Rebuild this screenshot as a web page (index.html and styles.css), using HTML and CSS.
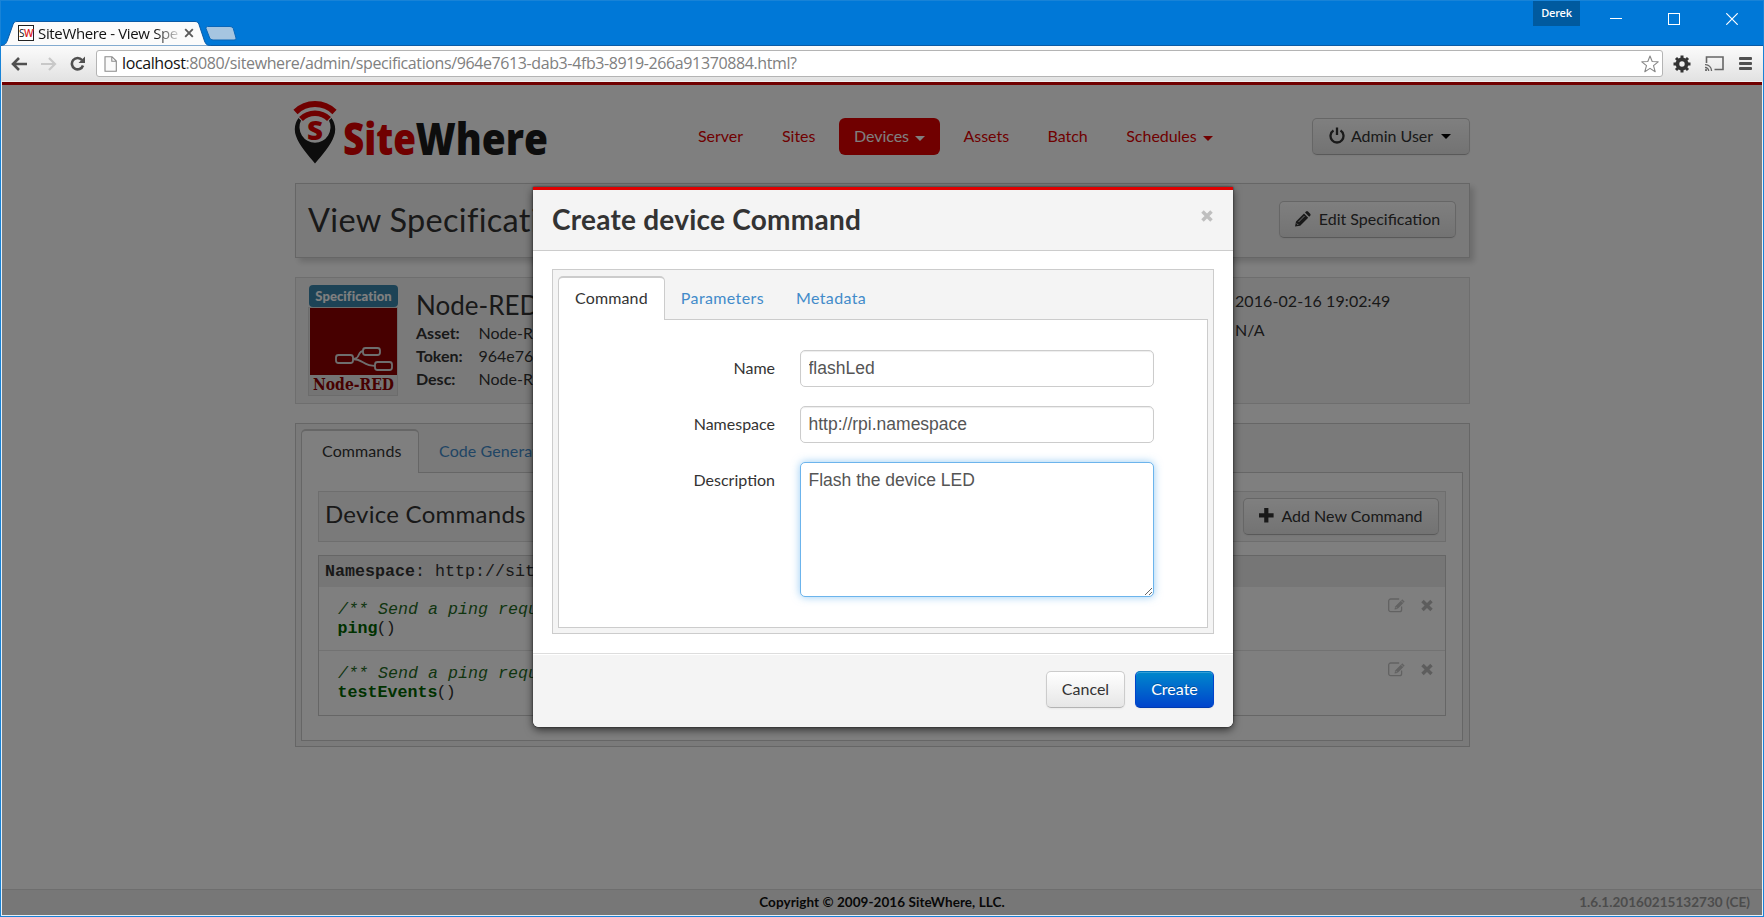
FILE: index.html
```html
<!DOCTYPE html>
<html lang="en">
<head>
<meta charset="utf-8">
<title>SiteWhere - View Specification</title>
<link rel="stylesheet" href="styles.css">
</head>
<body>
<svg class="defs" width="0" height="0">
  <symbol id="edit" viewBox="0 0 18 15"><path d="M13.6 8.5v3.2a2 2 0 0 1-2 2H2.700a2 2 0 0 1-2-2V3a2 2 0 0 1 2-2h8.500" fill="none" stroke="currentColor" stroke-width="1.300"/><path d="M6.500 11.500l.6-3L14.300 1.300l2.400 2.400-7.200 7.200z" fill="currentColor"/><path d="M7.500 8.800l1.700 1.700M13 2.500l2.400 2.400" stroke="#fff" stroke-width=".8"/></symbol>
  <symbol id="cross" viewBox="0 0 12 12"><path d="M1.500 1.500l9 9M10.500 1.500l-9 9" stroke="currentColor" stroke-width="3.500"/></symbol>
</svg>
<div class="window">
  <header class="titlebar">
    <div class="tab">
      <svg class="tab-shape" width="212" height="25" viewBox="0 0 212 25"><path d="M0 24.500C4 24 5 23 6.500 19L12 3.500C13 1 14 .5 16 .5H194c2 0 3.200.8 4 3l5.500 16.500c1.500 3.500 2.500 4.500 6 4.500V25H0z" fill="#fbfbfb" stroke="#0a5aa5" stroke-width="1"/></svg>
      <span class="favicon">S<b>W</b></span>
      <span class="tab-title">SiteWhere - View Spe</span>
      <svg class="tab-close" width="10" height="10"><path d="M1.200 1.200l7.600 7.600M8.800 1.200L1.200 8.800" stroke="#5a5a5a" stroke-width="1.900"/></svg>
    </div>
    <svg class="new-tab" width="32" height="15"><path d="M2.500.5H25q2.500 0 3.300 2l2.700 9.500q.7 2-2 2H8q-2.500 0-3.300-2L1 2.500Q.5.500 2.500.5z" fill="#a6c5e0" stroke="#0a66b8"/></svg>
    <div class="spacer"></div>
    <span class="user-badge">Derek</span>
    <div class="win-controls">
      <svg width="12" height="12"><path d="M0 5.500h12" stroke="#fff"/></svg>
      <svg width="12" height="12"><rect x=".5" y=".5" width="11" height="11" fill="none" stroke="#fff"/></svg>
      <svg width="12" height="12"><path d="M.3.300l11.400 11.400M11.700.300L.3 11.700" stroke="#fff" stroke-width="1.200"/></svg>
    </div>
  </header>
  <div class="toolbar">
    <svg class="back" width="16" height="14"><path d="M8 1L2 7l6 6M2 7h14" fill="none" stroke="#505050" stroke-width="2.600"/></svg>
    <svg class="fwd" width="16" height="14"><path d="M8 1l6 6-6 6M14 7H0" fill="none" stroke="#c8c8c8" stroke-width="2.200"/></svg>
    <svg class="reload" width="16" height="15"><path d="M12 4A5.700 5.700 0 1 0 13 9.500" fill="none" stroke="#505050" stroke-width="2.600"/><path d="M15 .5V7H8.500z" fill="#505050"/></svg>
    <div class="omnibox">
      <svg width="13" height="16"><path d="M1 .7h7l4.300 4.300v10.300H1zM7.800.7V5.200h4.500" fill="#fafafa" stroke="#8a8a8a" stroke-width="1.100"/></svg>
      <span class="url"><b>localhost</b>:8080/sitewhere/admin/specifications/964e7613-dab3-4fb3-8919-266a91370884.html?</span>
      <svg class="star" width="18" height="18" viewBox="0 0 18 18"><path d="M9 1l2.200 5.500 6 .3-4.700 3.900 1.700 6L9 13.400 3.800 16.700l1.700-6L.8 6.800l6-.3z" fill="#fff" stroke="#888" stroke-width="1.100" stroke-linejoin="round"/></svg>
    </div>
    <svg class="gear" width="18" height="18" viewBox="-9 -9 18 18"><circle r="4.600" fill="none" stroke="#333" stroke-width="3.800"/><path d="M0-8.500v3M0 8.500v-3M-8.500 0h3M8.500 0h-3M-6-6l2 2M6 6L4 4M-6 6l2-2M6-6L4-4" stroke="#333" stroke-width="3"/></svg>
    <svg class="cast" width="19" height="15"><path d="M1.500 7V1h16.500v12.500H9.500" fill="none" stroke="#666" stroke-width="1.600"/><path d="M0 8.700A6 6 0 0 1 6.500 15M0 11.500A3.500 3.500 0 0 1 3.700 15" fill="none" stroke="#666" stroke-width="1.300"/><circle cx="1" cy="14" r="1.100" fill="#666"/></svg>
    <svg class="menu" width="13" height="13"><path d="M1 1.500h11M1 6.500h11M1 11.500h11" stroke="#505050" stroke-width="2.800" stroke-linecap="round"/></svg>
  </div>

  <div class="page">
    <div class="container">
      <div class="masthead">
        <svg class="logo" width="262" height="80" viewBox="0 0 262 80">
          <path d="M5.500 18A20 20 0 0 0 3 36C6 45 15 55 22 63.500 29 55 38 45 41 36A20 20 0 0 0 38.500 18L36 20.500A15.500 15.500 0 1 1 8 20.500z" fill="#1a1a1a"/>
          <path d="M2.500 12A28 28 0 0 1 41.500 12" fill="none" stroke="#e00000" stroke-width="6"/>
          <path d="M8 19A20 20 0 0 1 36 19" fill="none" stroke="#e00000" stroke-width="5.500"/>
          <text x="14" y="39.500" class="pin-letter" textLength="16" lengthAdjust="spacingAndGlyphs">S</text>
          <text x="50" y="55" class="logo-text" textLength="73" lengthAdjust="spacingAndGlyphs" fill="#e00000">Site</text>
          <text x="122.500" y="55" class="logo-text" textLength="132.500" lengthAdjust="spacingAndGlyphs" fill="#1a1a1a">Where</text>
        </svg>
        <nav class="nav">
          <a>Server</a><a>Sites</a><a class="active">Devices<i class="caret"></i></a><a>Assets</a><a>Batch</a><a>Schedules<i class="caret"></i></a>
        </nav>
        <a class="btn admin"><svg width="16" height="17"><path d="M4.500 3.500a6.500 6.500 0 1 0 7 0M8 .5v7.500" fill="none" stroke="#333" stroke-width="2.300"/></svg>Admin User<i class="caret"></i></a>
      </div>

      <div class="title-panel">
        <h1>View Specification</h1>
        <a class="btn edit-btn"><svg width="17" height="16"><path d="M0 15.500L1 10.500 9 2.500l4.200 4.200-8 8zM10 1.500l1-1q1-.8 2 0l2.200 2.200q.8 1 0 2l-1 1z" fill="#333"/><path d="M3.500 11l6-6M1.800 12.500l1.500 1.500" stroke="#eee" stroke-width=".9"/></svg>Edit Specification</a>
      </div>

      <div class="spec-panel">
        <div class="thumb">
          <span class="label">Specification</span>
          <svg width="90" height="89"><rect x=".5" y=".5" width="89" height="88" fill="#e8e8e8" stroke="#d8d8d8"/><rect x="2" y="1" width="87" height="67" fill="#8f0000"/>
            <g fill="none" stroke="#ddd" stroke-width="1.800"><path d="M44 52c10 0 4-8 12-8M44 52c12 0 10 7 24 7"/><g fill="#8f0000"><rect x="28" y="48" width="17" height="8" rx="2.500"/><rect x="55" y="41" width="17" height="7" rx="2.500"/><rect x="67" y="55" width="17" height="8" rx="2.500"/></g></g>
            <text x="5" y="83" class="node-text" textLength="81" lengthAdjust="spacingAndGlyphs">Node-RED</text></svg>
        </div>
        <div class="spec-info">
          <h2>Node-RED</h2>
          <div class="field"><b>Asset:</b>Node-RED</div>
          <div class="field"><b>Token:</b>964e7613</div>
          <div class="field"><b>Desc:</b>Node-RED</div>
        </div>
        <div class="dates"><div>2016-02-16 19:02:49</div><div>N/A</div></div>
      </div>

      <div class="tab-panel main-tabs">
        <div class="tabs"><a class="on">Commands</a><a>Code Generation</a></div>
        <div class="tab-body">
          <div class="cmd-head"><h3>Device Commands</h3>
            <a class="btn add-btn"><svg width="15" height="15"><path d="M7.300 0v14.600M0 7.300h14.600" stroke="#333" stroke-width="4.200"/></svg>Add New Command</a></div>
          <div class="cmd-table">
            <div class="ns"><b>Namespace</b>: http://sitewhere</div>
            <div class="cmd"><div class="code"><em>/** Send a ping request</em><div><b>ping</b><span>()</span></div></div><svg class="i-edit"><use href="#edit"/></svg><svg class="i-del"><use href="#cross"/></svg></div>
            <div class="cmd"><div class="code"><em>/** Send a ping request</em><div><b>testEvents</b><span>()</span></div></div><svg class="i-edit"><use href="#edit"/></svg><svg class="i-del"><use href="#cross"/></svg></div>
          </div>
        </div>
      </div>
    </div>
    <footer class="footer"><span class="copy">Copyright © 2009-2016 SiteWhere, LLC.</span><span class="version">1.6.1.20160215132730 (CE)</span></footer>

    <div class="backdrop">
      <div class="modal">
        <div class="modal-head"><h2>Create device Command</h2><svg class="close"><use href="#cross"/></svg></div>
        <div class="modal-body">
          <div class="tab-panel">
            <div class="tabs"><a class="on">Command</a><a>Parameters</a><a>Metadata</a></div>
            <div class="tab-body form">
              <label>Name</label><input type="text" value="flashLed">
              <label>Namespace</label><input type="text" value="http://rpi.namespace">
              <label>Description</label><textarea>Flash the device LED</textarea>
            </div>
          </div>
        </div>
        <div class="modal-foot"><a class="btn">Cancel</a><a class="btn primary">Create</a></div>
      </div>
    </div>
  </div>
</div>
</body>
</html>
```
FILE: styles.css
```css
* { box-sizing: border-box; }
body { margin: 0; font: 16px Lato, sans-serif; color: #333; overflow: hidden; }
h1, h2, h3 { margin: 0; font-weight: 400; white-space: nowrap; }
svg { display: block; flex: none; }
.defs { position: absolute; }
.window { width: 1764px; height: 917px; display: flex; flex-direction: column; background: #e8f0f6; border: 1px solid #1883d7; }
.spacer { flex: 1; }

.titlebar { height: 45px; display: flex; background: #0078d7; border-bottom: 1px solid #0a5aa5; }
.tab { position: relative; width: 212px; height: 25px; margin-top: 20px; padding: 0 0 1px 17px; display: flex; align-items: center; }
.tab-shape { position: absolute; left: 0; top: 0; }
.favicon, .tab-title, .tab-close { position: relative; }
.favicon { width: 16px; height: 16px; border: 1px solid #222; background: #fff; font: 10px/14px "Open Sans", sans-serif; letter-spacing: -.5px; color: #111; white-space: nowrap; }
.favicon b { color: #d22; font-weight: 600; }
.tab-title { margin-left: 4px; width: 140px; font: 15px/20px "Open Sans", sans-serif; white-space: nowrap; overflow: hidden; letter-spacing: -.35px; background: linear-gradient(90deg, #111 118px, #ccc 139px); -webkit-background-clip: text; color: transparent; }
.tab-close { margin-left: 6px; }
.new-tab { margin: 25px 0 0 -8px; }
.user-badge { width: 47px; height: 25px; background: #005a9f; color: #fff; font: 600 11px/23px "Open Sans", sans-serif; text-align: center; letter-spacing: -.3px; }
.win-controls { display: flex; gap: 46px; margin: 12px 25px 0 30px; }

.toolbar { height: 36px; display: flex; align-items: center; background: linear-gradient(#fbfbfb, #e2e2e2); border-bottom: 1px solid #f0f0f0; padding: 0 11px 0 10px; }
.fwd { margin-left: 14px; }
.reload { margin-left: 13px; }
.omnibox { display: flex; align-items: center; flex: 1; height: 27px; margin: 0 10px 0 10px; padding: 0 3px 0 7px; background: #fff; border: 1px solid #b4b4b4; border-radius: 3px; }
.url { flex: 1; margin: -1px 0 0 5px; font: 16px/24px "Open Sans", sans-serif; color: #808080; letter-spacing: -.39px; }
.url b { color: #111; font-weight: 400; }
.cast { margin-left: 14px; }
.menu { margin-left: 15px; }

.page { position: relative; flex: 1; margin: 0 1px 1px; background: #fff; border-top: 3px solid #e00000; display: flex; flex-direction: column; }
.container { width: 1175px; margin-left: 293px; flex: 1; }
.masthead { height: 98px; display: flex; align-items: flex-start; }
.logo { margin: 15px 0 0 -2px; }
.logo-text { font: 800 45px "Open Sans", sans-serif; }
.pin-letter { font: 800 27px "Open Sans", sans-serif; fill: #e00000; }
.nav { display: flex; margin: 33px 0 0 128px; gap: 9px; flex: 1; }
.nav a { height: 37px; line-height: 35px; padding: 0 15px 2px; color: #e00000; border-radius: 6px; display: flex; align-items: center; letter-spacing: -.03px; }
.nav a:nth-child(n+4) { margin-left: -.5px; }
.nav a.active { background: #e00000; color: #fff; padding: 0 15px 2px 14.500px; }
.caret { border: 5px solid transparent; border-top-color: currentColor; border-bottom: 0; margin: 5px 0 0 6px; }
.btn { display: inline-flex; align-items: center; justify-content: center; height: 37px; padding-bottom: 2px; border: 1px solid #ccc; border-bottom-color: #b3b3b3; border-radius: 5px; background: linear-gradient(#fff, #e6e6e6); box-shadow: inset 0 1px 0 rgba(255,255,255,.2), 0 1px 2px rgba(0,0,0,.05); white-space: nowrap; color: #333; }
.admin { width: 158px; margin-top: 33px; }
.admin svg { margin: -1px 6px 0 -2px; }
.admin .caret { color: #000; margin: 1px 0 0 8px; }

.title-panel { height: 75px; border: 1px solid #ccc; background: #f5f5f5; box-shadow: 4px 4px 6px rgba(0,0,0,.16); display: flex; justify-content: space-between; padding: 17px 13px; }
h1 { font-size: 32.500px; line-height: 37px; letter-spacing: .3px; margin-left: -1px; }
.edit-btn { width: 177px; }
.edit-btn svg { margin: 0 7px 0 0; }

.spec-panel { height: 127px; margin-top: 19px; border: 1px solid #dcdcdc; background: #f5f5f5; display: flex; padding: 7px 12px; }
.thumb { width: 90px; }
.label { display: block; width: 89px; height: 22px; margin-left: 1px; border-radius: 4px; background: #3a87ad; color: #fff; font-weight: 900; font-size: 13px; line-height: 22px; text-align: center; letter-spacing: .1px; }
.node-text { font: 700 17px "DejaVu Serif", serif; fill: #8f0000; }
.spec-info { width: 819px; margin-left: 18px; }
.spec-info h2 { font-size: 26px; line-height: 30px; margin: 5px 0 1px; }
.field { line-height: 23px; height: 23px; }
.field b { display: inline-block; width: 62.500px; font-weight: 700; }
.dates { line-height: 29px; padding-top: 1px; letter-spacing: .08px; }

.tab-panel { border: 1px solid #ccc; background: #f4f4f4; padding: 5px; }
.main-tabs { height: 324px; margin-top: 19px; padding: 5px 6px 5px 5px; }
.tabs { display: flex; height: 43px; }
.tabs a { height: 44px; line-height: 43px; padding: 0 16px 0 17px; color: #428bca; letter-spacing: .1px; }
.tabs a.on { position: relative; background: #fff; color: #333; border: 1px solid #ccc; border-top-width: 2px; border-bottom: 0; border-radius: 5px 5px 0 0; line-height: 40px; padding: 0 16px; }
.modal .tabs a { letter-spacing: .38px; padding: 0 16px 0 16px; }
.modal .tabs a.on { letter-spacing: .15px; padding-right: 16px; }
.tab-body { border: 1px solid #ccc; background: #fff; }
.main-tabs .tab-body { height: 269px; padding: 18px 16px; }
.main-tabs .tabs a.on { padding: 0 16px 0 20px; width: 118px; }
.main-tabs .tabs a { padding-left: 20px; }
.cmd-head { height: 51px; border: 1px solid #dcdcdc; background: #f5f5f5; display: flex; justify-content: space-between; padding: 6px; }
h3 { font-size: 24px; line-height: 32px; letter-spacing: .27px; }
.add-btn { width: 196px; }
.add-btn svg { margin: -1px 7px 0 0; }
.cmd-table { height: 161px; margin-top: 13px; border: 1px solid #ccc; font: 16.660px/19.500px "Liberation Mono", monospace; }
.ns { height: 31px; line-height: 31px; background: #ededed; padding-left: 6px; }
.cmd { height: 64px; display: flex; padding: 13px 12px 0 19px; border-bottom: 1px solid #e4e4e4; }
.cmd + .cmd { border: 0; }
.code { flex: 1; }
.code div { margin: -1px 0 0 -.5px; }
.code span { margin-left: -1px; letter-spacing: -.8px; }
.code em { color: #1f6b1f; }
.code b { color: #006400; }
.i-edit { width: 18px; height: 15px; margin-top: -2px; color: #c4c4c4; }
.i-del { width: 12px; height: 13px; margin: -1px 0 0 15px; color: #bbb; }

.footer { height: 26px; flex: none; display: grid; grid-template-columns: 1fr auto 1fr; border-top: 1px solid #dcdcdc; background: #eee; font-weight: 700; font-size: 13.500px; line-height: 25px; }
.copy { grid-column: 2; color: #111; letter-spacing: .06px; }
.version { text-align: right; padding-right: 12px; color: #999; letter-spacing: .04px; }

.backdrop { position: absolute; inset: -3px 0 0; background: rgba(0,0,0,.5); }
.modal { position: absolute; left: 531px; top: 105px; width: 700px; height: 540px; background: #fff; border-top: 3px solid #e00000; border-radius: 0 0 6px 6px; box-shadow: 0 3px 9px rgba(0,0,0,.6), 0 0 2px rgba(0,0,0,.8); display: flex; flex-direction: column; }
.modal-head { height: 61px; background: #f4f4f4; border-bottom: 1px solid #ccc; padding: 10px 20px 0 19px; display: flex; justify-content: space-between; }
.modal-head h2 { font-weight: 700; font-size: 28px; line-height: 38px; letter-spacing: .24px; }
.close { width: 12px; height: 12px; margin-top: 10px; color: #bfbfbf; }
.modal-body { flex: 1; padding: 18px 19px; }
.modal-body .tab-panel { height: 365px; padding-top: 6px; }
.form { height: 309px; padding: 30px 53px 0 52px; display: grid; grid-template-columns: 164px 354px; grid-template-rows: 37px 37px 135px; gap: 19px 25px; }
.form label { text-align: right; line-height: 36px; }
.form input, .form textarea { width: 354px; margin: 0; border: 1px solid #ccc; border-radius: 5px; padding: 0 8px 0 7.500px; font: 17.500px/35px "Liberation Sans", Arial, sans-serif; color: #555; box-shadow: inset 0 1px 1px rgba(0,0,0,.075); outline: none; background: #fff; }
.form textarea { height: 135px; padding-top: 6px; line-height: 22px; border-color: #6cb4ec; box-shadow: 0 0 8px rgba(82,168,236,.6); }
.modal-foot { height: 74px; background: #f4f4f4; border-top: 1px solid #ddd; box-shadow: inset 0 1px 0 #fff; border-radius: 0 0 6px 6px; display: flex; justify-content: flex-end; gap: 10px; padding: 17px 19px 0; }
.modal-foot .btn { width: 79px; }
.modal-foot .primary { color: #fff; background: linear-gradient(#0088cc, #0044cc); border-color: #0074c0 #0044cc #003aae; text-shadow: 0 -1px 0 rgba(0,0,0,.25); }
```
